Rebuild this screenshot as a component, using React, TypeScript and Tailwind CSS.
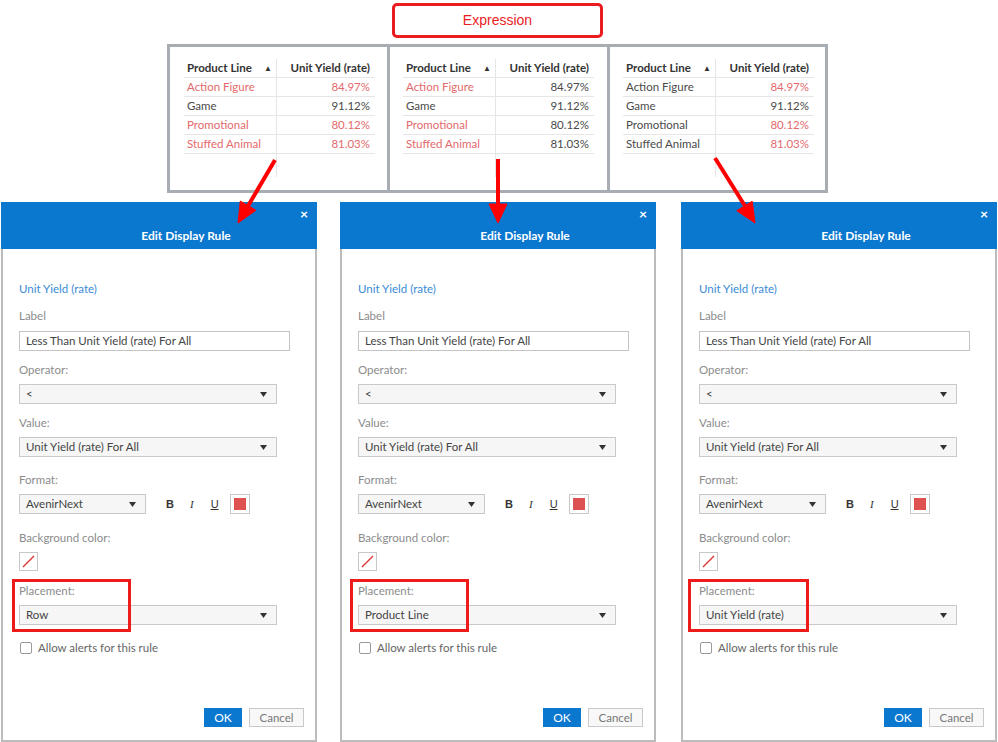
import type { ReactNode } from "react";

const RED_TEXT = "text-[#e36a6c]";
const DARK_TEXT = "text-[#4a4a4a]";

type Row = { name: string; value: string; nameRed: boolean; valueRed: boolean };

const tables: Row[][] = [
  [
    { name: "Action Figure", value: "84.97%", nameRed: true, valueRed: true },
    { name: "Game", value: "91.12%", nameRed: false, valueRed: false },
    { name: "Promotional", value: "80.12%", nameRed: true, valueRed: true },
    { name: "Stuffed Animal", value: "81.03%", nameRed: true, valueRed: true },
  ],
  [
    { name: "Action Figure", value: "84.97%", nameRed: true, valueRed: false },
    { name: "Game", value: "91.12%", nameRed: false, valueRed: false },
    { name: "Promotional", value: "80.12%", nameRed: true, valueRed: false },
    { name: "Stuffed Animal", value: "81.03%", nameRed: true, valueRed: false },
  ],
  [
    { name: "Action Figure", value: "84.97%", nameRed: false, valueRed: true },
    { name: "Game", value: "91.12%", nameRed: false, valueRed: false },
    { name: "Promotional", value: "80.12%", nameRed: false, valueRed: true },
    { name: "Stuffed Animal", value: "81.03%", nameRed: false, valueRed: true },
  ],
];

function MiniTable({ rows }: { rows: Row[] }) {
  return (
    <div className="grid grid-cols-[93px_98px] text-[11.5px] leading-none">
      <div className="h-[19px] border-b border-r border-[#e6e6e6] flex items-center justify-between pl-[3px] pr-[4px] font-bold text-[#333]">
        <span>Product Line</span>
        <span className="text-[8px]">▲</span>
      </div>
      <div className="h-[19px] border-b border-[#e6e6e6] flex items-center justify-end pr-[5px] font-bold text-[#333]">
        Unit Yield (rate)
      </div>
      {rows.map((r) => (
        <div key={r.name} className="contents">
          <div className={`h-[19px] border-b border-r border-[#e6e6e6] flex items-center pl-[3px] ${r.nameRed ? RED_TEXT : DARK_TEXT}`}>
            {r.name}
          </div>
          <div className={`h-[19px] border-b border-[#e6e6e6] flex items-center justify-end pr-[5px] ${r.valueRed ? RED_TEXT : DARK_TEXT}`}>
            {r.value}
          </div>
        </div>
      ))}
      <div className="h-[23px] border-r border-[#e6e6e6]" />
      <div className="h-[23px]" />
    </div>
  );
}

function Caret() {
  return (
    <svg width="7" height="5" viewBox="0 0 7 5">
      <polygon points="0,0 7,0 3.5,5" fill="#333" />
    </svg>
  );
}

function Select({ value, width }: { value: string; width: string }) {
  return (
    <div className={`${width} h-[20px] border border-[#c9c9c9] bg-[#f6f6f6] flex items-center justify-between pl-[6px] pr-[9px] text-[11.5px] text-[#444]`}>
      <span>{value}</span>
      <Caret />
    </div>
  );
}

function FieldLabel({ children, mt }: { children: ReactNode; mt: string }) {
  return <div className={`${mt} h-[14px] leading-[14px] text-[11.5px] text-[#8c8c8c]`}>{children}</div>;
}

function Dialog({ placement, ml, boxLeft, boxWidth }: { placement: string; ml: string; boxLeft: string; boxWidth: string }) {
  return (
    <div className={`${ml} relative w-[316px] h-[540px] border-2 border-t-0 border-[#bcbcbc] bg-white flex flex-col font-['Lato',sans-serif]`}>
      <div className="relative -mx-[2px] h-[47px] bg-[#0b78d0] flex items-end justify-center pl-[54px] pb-[6px]">
        <span className="text-[12px] font-bold text-white leading-[14px]">Edit Display Rule</span>
        <span className="absolute right-[9px] top-[5px] text-[14px] font-bold text-white leading-[14px]">×</span>
      </div>
      <div className="flex-1 flex flex-col pl-[16px]">
        <div className="mt-[33px] h-[14px] leading-[14px] text-[11.5px] text-[#3a8bd6]">Unit Yield (rate)</div>
        <FieldLabel mt="mt-[13px]">Label</FieldLabel>
        <div className="mt-[8px] w-[271px] h-[20px] border border-[#c4c4c4] bg-white flex items-center pl-[6px] text-[11.5px] text-[#444]">
          Less Than Unit Yield (rate) For All
        </div>
        <FieldLabel mt="mt-[12px]">Operator:</FieldLabel>
        <div className="mt-[7px]">
          <Select value="<" width="w-[258px]" />
        </div>
        <FieldLabel mt="mt-[12px]">Value:</FieldLabel>
        <div className="mt-[7px]">
          <Select value="Unit Yield (rate) For All" width="w-[258px]" />
        </div>
        <FieldLabel mt="mt-[16px]">Format:</FieldLabel>
        <div className="mt-[7px] flex items-center h-[20px]">
          <Select value="AvenirNext" width="w-[127px]" />
          <span className="ml-[20px] text-[11px] font-bold text-[#333] font-['Liberation_Sans',sans-serif]">B</span>
          <span className="ml-[16px] text-[11px] italic text-[#333] font-['Liberation_Serif',serif]">I</span>
          <span className="ml-[17px] text-[11px] underline text-[#333] font-['Liberation_Sans',sans-serif]">U</span>
          <div className="ml-[11px] w-[20px] h-[20px] border border-[#c8c8c8] bg-white p-[3px]">
            <div className="w-full h-full bg-[#dc5151]" />
          </div>
        </div>
        <FieldLabel mt="mt-[17px]">Background color:</FieldLabel>
        <div className="mt-[7px] w-[19px] h-[19px] border border-[#c8c8c8] bg-white">
          <svg width="17" height="17" viewBox="0 0 17 17">
            <line x1="3" y1="14" x2="14" y2="3" stroke="#e23a3c" strokeWidth="1.4" />
          </svg>
        </div>
        <FieldLabel mt="mt-[13px]">Placement:</FieldLabel>
        <div className="mt-[7px]">
          <Select value={placement} width="w-[258px]" />
        </div>
        <div className="mt-[16px] h-[14px] flex items-center">
          <div className="ml-[1px] w-[12px] h-[12px] border border-[#9a9a9a] rounded-[2px] bg-white" />
          <span className="ml-[6px] text-[11.5px] text-[#666]">Allow alerts for this rule</span>
        </div>
        <div className="mt-auto mb-[13px] pr-[11px] flex justify-end gap-[7px]">
          <div className="w-[38px] h-[19px] bg-[#0b78d0] text-white text-[12px] flex items-center justify-center">OK</div>
          <div className="w-[55px] h-[19px] border border-[#c9c9c9] bg-[#f8f8f8] text-[#777] text-[11.5px] flex items-center justify-center">Cancel</div>
        </div>
      </div>
      <div className={`absolute ${boxLeft} top-[377px] ${boxWidth} h-[53px] border-[3px] border-[#ee1b1b]`} />
    </div>
  );
}

export default function App() {
  return (
    <div className="relative w-[998px] h-[742px] bg-white overflow-hidden font-['Lato',sans-serif]">
      <div className="pt-[3px] ml-[392px] w-[211px]">
        <div className="h-[35px] border-[3px] border-[#ea1c1f] rounded-[5px] flex items-center justify-center text-[14px] text-[#ea1c1f] font-['Liberation_Sans',sans-serif]">
          Expression
        </div>
      </div>
      <div className="mt-[6px] ml-[167px] w-[661px] h-[149px] border-[3px] border-[#a8acb3] flex">
        <div className="w-[220px] border-r-[3px] border-[#a8acb3] pt-[12px] pl-[14px]">
          <MiniTable rows={tables[0]} />
        </div>
        <div className="w-[220px] border-r-[3px] border-[#a8acb3] pt-[12px] pl-[13px]">
          <MiniTable rows={tables[1]} />
        </div>
        <div className="flex-1 pt-[12px] pl-[13px]">
          <MiniTable rows={tables[2]} />
        </div>
      </div>
      <div className="mt-[9px] flex">
        <Dialog placement="Row" ml="ml-[1px]" boxLeft="left-[9px]" boxWidth="w-[119px]" />
        <Dialog placement="Product Line" ml="ml-[23px]" boxLeft="left-[8px]" boxWidth="w-[119px]" />
        <Dialog placement="Unit Yield (rate)" ml="ml-[25px]" boxLeft="left-[5px]" boxWidth="w-[121px]" />
      </div>
      <svg className="absolute inset-0 pointer-events-none" width="998" height="742" viewBox="0 0 998 742">
        <g fill="#ff0000" stroke="#ff0000">
          <line x1="275" y1="160" x2="248" y2="206" strokeWidth="4" />
          <polygon points="238,223 255.9,210.3 240.3,201.1" strokeWidth="1" />
          <line x1="498" y1="159" x2="498" y2="205" strokeWidth="4" />
          <polygon points="498,223 489,204 507,204" strokeWidth="1" />
          <line x1="715" y1="158" x2="745" y2="206" strokeWidth="4" />
          <polygon points="755,223 752.2,201.3 736.8,210.7" strokeWidth="1" />
        </g>
      </svg>
    </div>
  );
}
